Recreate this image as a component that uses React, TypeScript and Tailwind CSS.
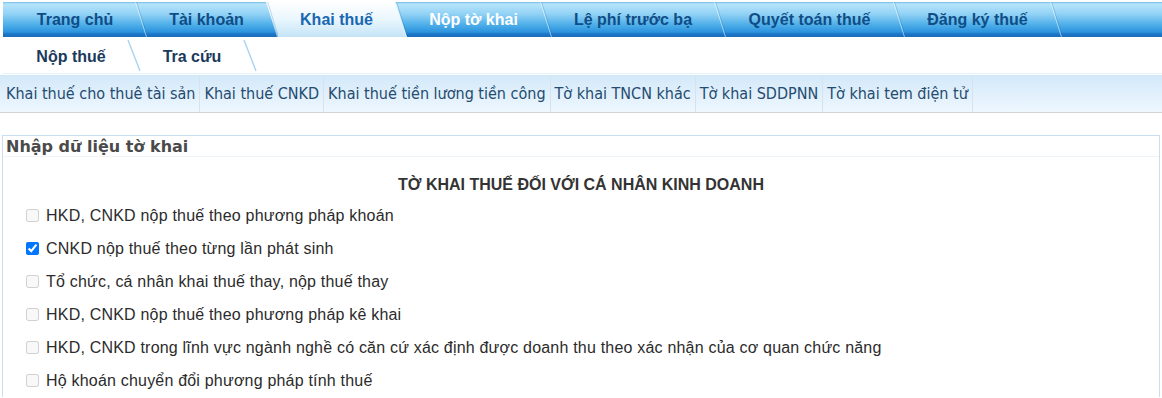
import React from "react";

type TabSepProps = { id: string; fill?: "left" | "right" };

const TabSep = ({ id, fill }: TabSepProps) => (
  <svg width="12" height="35" viewBox="0 0 12 35" className="block shrink-0">
    <defs>
      <linearGradient id={id} x1="0" y1="0" x2="0" y2="1">
        <stop offset="0" stopColor="#ffffff" />
        <stop offset="0.5" stopColor="#e9f6fd" />
        <stop offset="1" stopColor="#c4e4f7" />
      </linearGradient>
    </defs>
    {fill === "right" && <polygon points="0,0 12,0 12,35" fill={`url(#${id})`} />}
    {fill === "left" && <polygon points="0,0 12,35 0,35" fill={`url(#${id})`} />}
    <line x1="0.5" y1="0" x2="11.5" y2="35" stroke="#ffffff" strokeOpacity="0.55" />
    <line x1="1.6" y1="0" x2="12.6" y2="35" stroke="#1d6fb5" strokeOpacity="0.25" />
  </svg>
);

const SubSep = () => (
  <svg width="14" height="37" viewBox="0 0 14 37" className="block shrink-0">
    <line x1="1" y1="3" x2="13" y2="34" stroke="#a9d4ef" strokeWidth="1.4" />
  </svg>
);

const tabs = [
  { label: "Trang chủ", cls: "w-[132px] pl-[12px] text-[#0f4d86]" },
  { label: "Tài khoản", cls: "w-[119px] text-[#0f4d86]" },
  { label: "Khai thuế", cls: "w-[117px] text-[#1967b2] bg-[linear-gradient(to_bottom,#ffffff,#e9f6fd_50%,#c4e4f7)]" },
  { label: "Nộp tờ khai", cls: "w-[133px] text-white" },
  { label: "Lệ phí trước bạ", cls: "w-[162px] text-[#0f4d86]" },
  { label: "Quyết toán thuế", cls: "w-[167px] text-[#0f4d86]" },
  { label: "Đăng ký thuế", cls: "w-[145px] text-[#0f4d86]" },
];

const menuItems = [
  "Khai thuế cho thuê tài sản",
  "Khai thuế CNKD",
  "Khai thuế tiền lương tiền công",
  "Tờ khai TNCN khác",
  "Tờ khai SDDPNN",
  "Tờ khai tem điện tử",
];

const options = [
  { label: "HKD, CNKD nộp thuế theo phương pháp khoán", checked: false },
  { label: "CNKD nộp thuế theo từng lần phát sinh", checked: true },
  { label: "Tổ chức, cá nhân khai thuế thay, nộp thuế thay", checked: false },
  { label: "HKD, CNKD nộp thuế theo phương pháp kê khai", checked: false },
  {
    label:
      "HKD, CNKD trong lĩnh vực ngành nghề có căn cứ xác định được doanh thu theo xác nhận của cơ quan chức năng",
    checked: false,
  },
  { label: "Hộ khoán chuyển đổi phương pháp tính thuế", checked: false },
];

export default function App() {
  return (
    <div className="w-[1162px] h-[398px] overflow-hidden bg-white font-['Liberation_Sans',Arial,sans-serif]">
      {/* main tabs */}
      <div className="mt-[2px] ml-[3px] flex h-[35px] bg-[linear-gradient(to_bottom,#78bde6_0px,#b6e4fb_2px,#92d2f5_12px,#52b1ea_22px,#2c93de_30px,#1b77c6_32px,#1a6cba_35px)]">
        {tabs.map((t, i) => (
          <React.Fragment key={t.label}>
            <div className={`flex shrink-0 items-center justify-center text-[16px] font-bold ${t.cls}`}>
              {t.label}
            </div>
            <TabSep id={`g${i}`} fill={i === 1 ? "right" : i === 2 ? "left" : undefined} />
          </React.Fragment>
        ))}
        <div className="flex-1" />
      </div>

      {/* sub tabs */}
      <div className="ml-[3px] flex h-[37px] items-center border-b border-[#e1f0fa] text-[16px] font-bold text-[#1b3a5c]">
        <div className="w-[124px] pl-[12px] pt-[3px] text-center">Nộp thuế</div>
        <SubSep />
        <div className="w-[102px] pt-[3px] text-center">Tra cứu</div>
        <SubSep />
      </div>

      {/* menu strip */}
      <div className="mt-[1px] flex h-[38px] items-stretch border-t border-[#d2e6f6] border-b border-b-[#d3d3d3] bg-[linear-gradient(to_bottom,#d4e9f9,#eef7fe)] font-['DejaVu_Sans_Condensed','DejaVu_Sans',sans-serif] text-[16px] text-[#244b70] [font-stretch:condensed]">
        {menuItems.map((m, i) => (
          <div
            key={m}
            className={`flex items-center whitespace-nowrap border-r border-[#d6e3ee] pr-[4px] ${i === 0 ? "pl-[6px]" : "pl-[4px]"}`}
          >
            {m}
          </div>
        ))}
      </div>

      {/* input panel */}
      <div className="mt-[22px] ml-[2px] mr-[2px] border border-b-0 border-[#c9def0]">
        <div className="h-[21px] border-b border-[#eef3f7] pl-[3px] font-['DejaVu_Sans','Liberation_Sans',sans-serif] text-[16px] font-bold leading-[21px] text-[#4a4a4a]">
          Nhập dữ liệu tờ khai
        </div>
        <div className="mt-[18px] mb-[4px] h-[20px] text-center text-[16px] font-bold leading-[20px] text-[#333333]">
          TỜ KHAI THUẾ ĐỐI VỚI CÁ NHÂN KINH DOANH
        </div>
        <div className="flex flex-col">
          {options.map((o) => (
            <label key={o.label} className="flex h-[33px] items-center gap-[7px] pl-[23px] text-[16px] tracking-[0.2px] text-[#2b2b2b]">
              <input
                type="checkbox"
                className="h-[13px] w-[13px] shrink-0"
                checked={o.checked}
                disabled={!o.checked}
                readOnly
              />
              <span>{o.label}</span>
            </label>
          ))}
        </div>
      </div>
    </div>
  );
}
